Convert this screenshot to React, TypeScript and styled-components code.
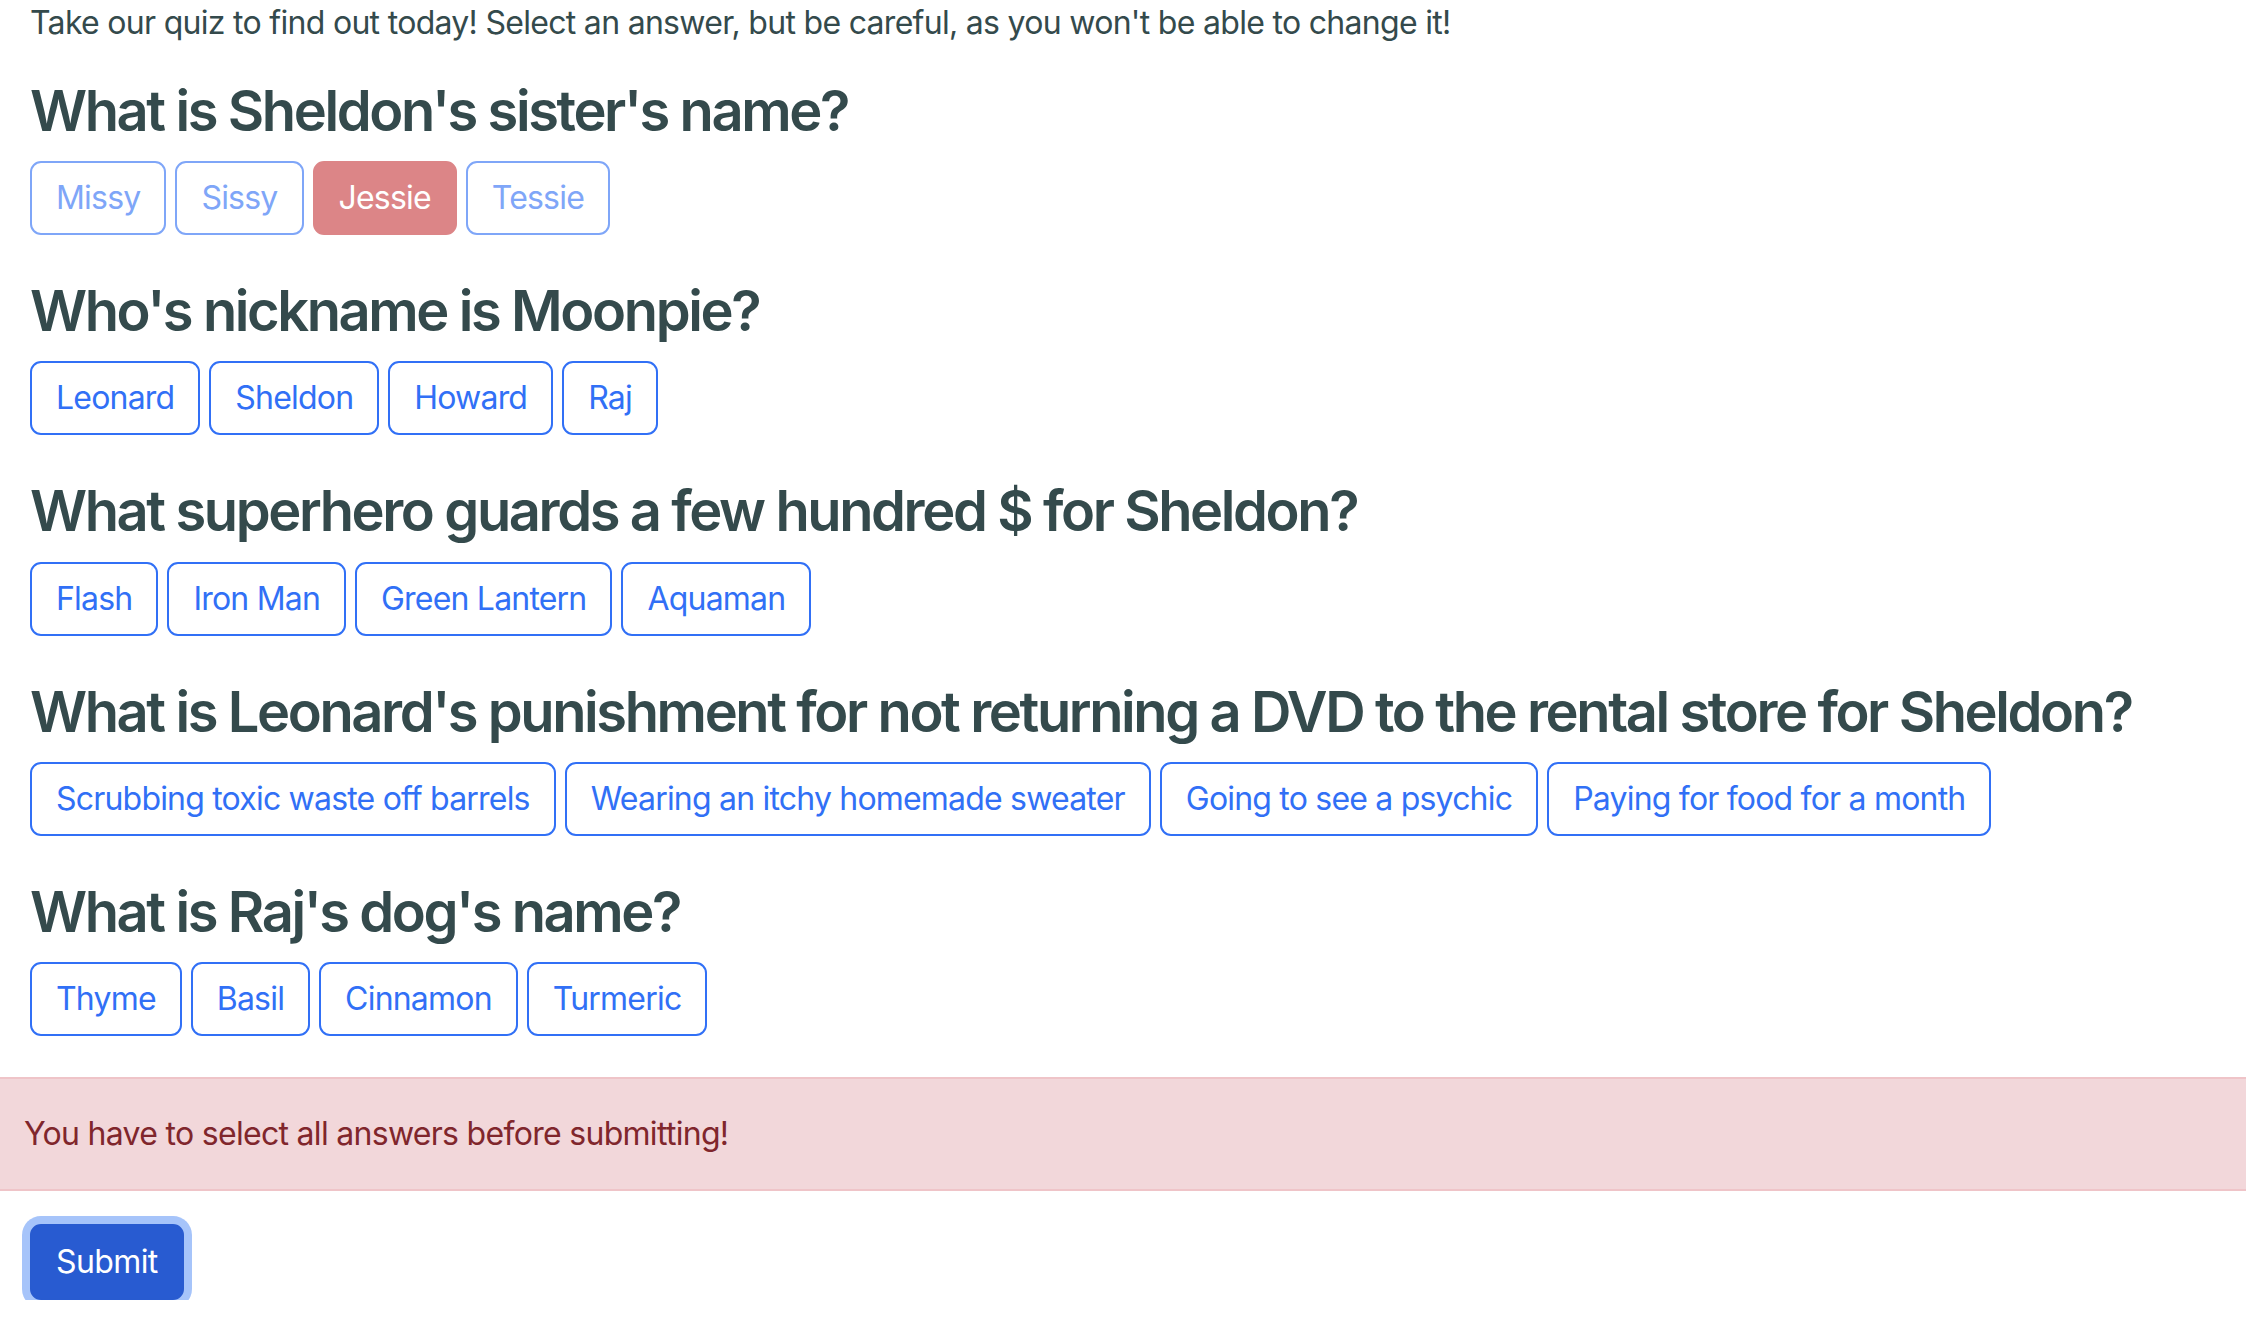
import React from "react";
import styled, { createGlobalStyle, css } from "styled-components";

const GlobalStyle = createGlobalStyle`
  html, body {
    margin: 0;
    padding: 0;
    background: #ffffff;
  }
  body {
    font-family: Inter, "Noto Sans", "Liberation Sans", sans-serif;
    color: #344a4c;
    font-size: 32px;
    line-height: 1.5;
    letter-spacing: -0.7px;
  }
  * { box-sizing: border-box; }
`;

const Page = styled.main`
  display: flex;
  flex-direction: column;
  width: 100%;
`;

const Content = styled.section`
  display: flex;
  flex-direction: column;
  padding: 0 30px;
`;

const Intro = styled.p`
  margin: -1px 0 31px;
  font-size: 32px;
  line-height: 48px;
  color: #344a4c;
`;

const QuestionBlock = styled.div`
  display: flex;
  flex-direction: column;
  margin-bottom: 43px;

  &:last-child {
    margin-bottom: 41px;
  }
`;

const Heading = styled.h2`
  margin: 0 0 16px;
  font-size: 56px;
  line-height: 1.2;
  font-weight: 600;
  letter-spacing: -2.4px;
  color: #344a4c;
`;

const Options = styled.div`
  display: flex;
  flex-wrap: wrap;
  gap: 9px;
`;

type Variant = "outline" | "outline-faded" | "danger-faded";

const OptionButton = styled.button<{ $variant: Variant }>`
  font-family: inherit;
  font-size: 32px;
  line-height: 48px;
  letter-spacing: -0.8px;
  padding: 11px 24px;
  border: 2px solid;
  border-radius: 11px;
  background: #ffffff;
  cursor: pointer;
  ${({ $variant }) =>
    $variant === "outline"
      ? css`
          border-color: #3170f6;
          color: #3170f6;
        `
      : $variant === "outline-faded"
      ? css`
          border-color: #7fa6f8;
          color: #7fa6f8;
          cursor: default;
        `
      : css`
          border-color: #dc8587;
          background: #dc8587;
          color: #ffffff;
          cursor: default;
        `}
`;

const Alert = styled.div`
  margin: 0 0 33px;
  padding: 31px 24px;
  background: #f2d7da;
  border-top: 2px solid #efc4c8;
  border-bottom: 2px solid #efc4c8;
  color: #80262c;
  font-size: 32px;
  line-height: 48px;
`;

const Footer = styled.div`
  display: flex;
  padding: 0 30px;
`;

const SubmitButton = styled.button`
  font-family: inherit;
  font-size: 32px;
  line-height: 48px;
  letter-spacing: -0.6px;
  padding: 12px 24px;
  border: 2px solid #285bd0;
  border-radius: 11px;
  background: #285bd1;
  color: #ffffff;
  box-shadow: 0 0 0 8px #a6c4fa;
  cursor: pointer;
`;

type Question = {
  q: string;
  options: string[];
  answered?: string;
};

const questions: Question[] = [
  {
    q: "What is Sheldon's sister's name?",
    options: ["Missy", "Sissy", "Jessie", "Tessie"],
    answered: "Jessie",
  },
  {
    q: "Who's nickname is Moonpie?",
    options: ["Leonard", "Sheldon", "Howard", "Raj"],
  },
  {
    q: "What superhero guards a few hundred $ for Sheldon?",
    options: ["Flash", "Iron Man", "Green Lantern", "Aquaman"],
  },
  {
    q: "What is Leonard's punishment for not returning a DVD to the rental store for Sheldon?",
    options: [
      "Scrubbing toxic waste off barrels",
      "Wearing an itchy homemade sweater",
      "Going to see a psychic",
      "Paying for food for a month",
    ],
  },
  {
    q: "What is Raj's dog's name?",
    options: ["Thyme", "Basil", "Cinnamon", "Turmeric"],
  },
];

export default function App() {
  return (
    <>
      <GlobalStyle />
      <Page>
        <Content>
          <Intro>
            Take our quiz to find out today! Select an answer, but be careful, as you won't be able to change it!
          </Intro>
          {questions.map((item) => (
            <QuestionBlock key={item.q}>
              <Heading>{item.q}</Heading>
              <Options>
                {item.options.map((opt) => {
                  const variant: Variant = item.answered
                    ? opt === item.answered
                      ? "danger-faded"
                      : "outline-faded"
                    : "outline";
                  return (
                    <OptionButton key={opt} $variant={variant} disabled={!!item.answered}>
                      {opt}
                    </OptionButton>
                  );
                })}
              </Options>
            </QuestionBlock>
          ))}
        </Content>
        <Alert>You have to select all answers before submitting!</Alert>
        <Footer>
          <SubmitButton>Submit</SubmitButton>
        </Footer>
      </Page>
    </>
  );
}
